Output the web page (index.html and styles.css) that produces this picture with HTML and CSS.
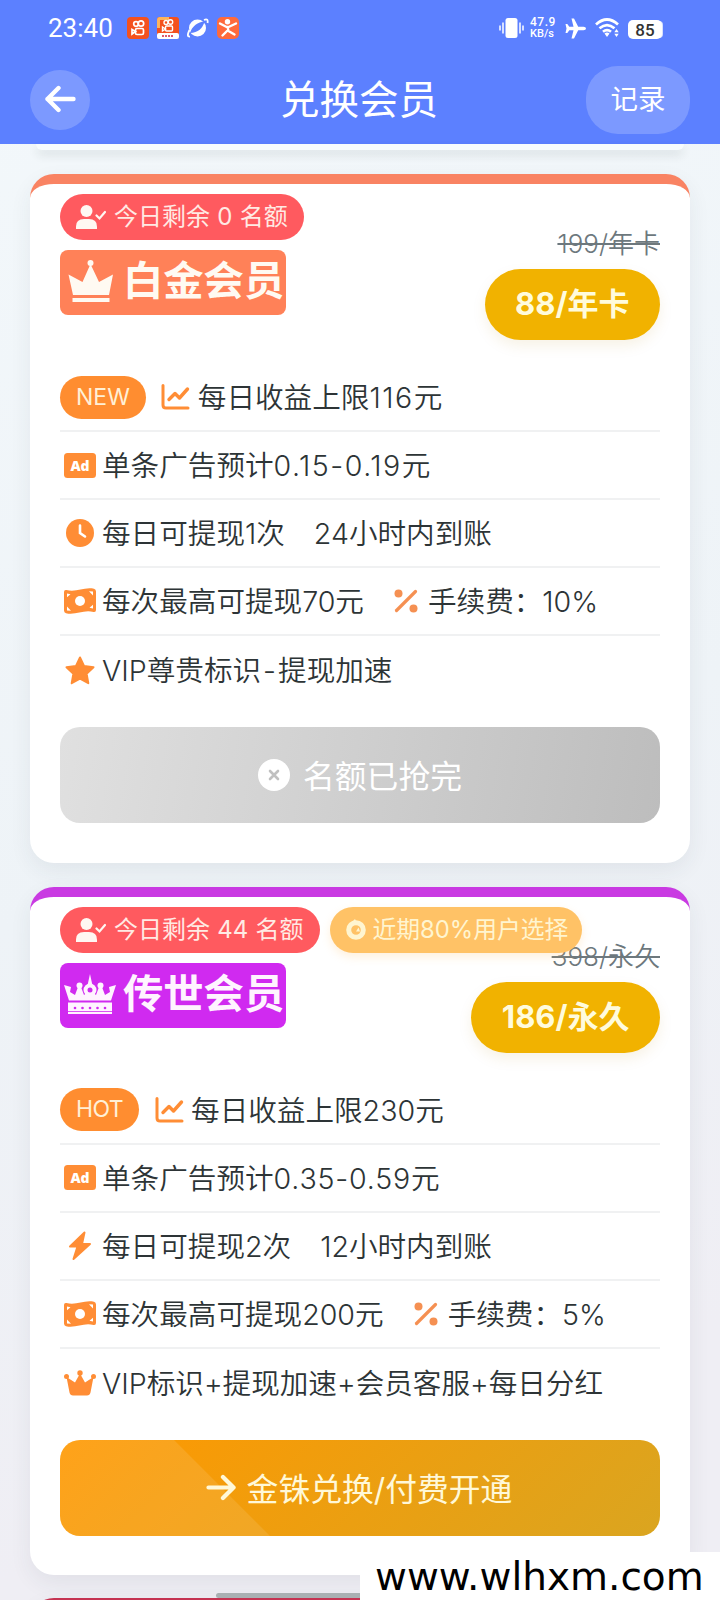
FILE: index.html
```html
<!DOCTYPE html>
<html lang="zh-CN">
<head>
<meta charset="utf-8">
<title>兑换会员</title>
<link rel="stylesheet" href="styles.css">
</head>
<body>
<svg class="sprite" width="0" height="0">
  <symbol id="user-check" viewBox="0 0 30 24"><circle cx="10.500" cy="6" r="6"/><path d="M0 24v-2.500Q0 14 8 14h5q8 0 8 7.500V24z"/><path d="M20.500 10.500l3 3 5.500-6.500" fill="none" stroke="currentColor" stroke-width="2.200" stroke-linecap="round"/></symbol>
  <symbol id="chart" viewBox="0 0 28 26"><g fill="none" stroke="currentColor" stroke-width="3" stroke-linecap="round" stroke-linejoin="round"><path d="M1.500 1.500V21q0 3 3 3h22"/><path d="M7.500 15.500l6-6 4.500 4.500L26 5" stroke-width="3.400"/></g></symbol>
  <symbol id="clock" viewBox="0 0 28 28"><circle cx="14" cy="14" r="14"/><path d="M14 6.500V14l5 3.500" fill="none" stroke="#fff" stroke-width="2.600" stroke-linecap="round"/></symbol>
  <symbol id="money" viewBox="0 0 32 26"><path d="M0 4Q0 1.500 2.500 2C12 5 20-1.500 30 .8q2 .7 2 2.700v18.500q0 2.500-2.500 2C20 21 12 27.500 2 25.200Q0 24.500 0 22.500z"/><circle cx="16" cy="13" r="5" fill="#fff"/><path d="M3 5.500l3.500.8-3.500 3zM29 20.500l-3.500-.8 3.500-3zM3 22.500v-4l4 4.300zM29 3.500v4l-4-4.300z" fill="#fff"/></symbol>
  <symbol id="star" viewBox="0 0 30 29"><path d="M15 1.500l4 8.500 9.500 1.300-6.900 6.500 1.700 9.400L15 22.700l-8.300 4.500 1.700-9.400-6.900-6.500L11 10z" stroke="currentColor" stroke-width="2" stroke-linejoin="round"/></symbol>
  <symbol id="percent" viewBox="0 0 24 24"><circle cx="4.500" cy="4.500" r="4"/><circle cx="19.500" cy="19.500" r="4"/><path d="M21.500 2.500l-19 19" stroke="currentColor" stroke-width="3.200" stroke-linecap="round"/></symbol>
  <symbol id="bolt" viewBox="0 0 24 30"><path d="M16.500 1.500L2 15.500h7.500L5.500 28 22 13h-8z" stroke="currentColor" stroke-width="2" stroke-linejoin="round"/></symbol>
  <symbol id="crown-small" viewBox="0 0 32 26"><circle cx="16" cy="3" r="2.700"/><circle cx="2.500" cy="6.500" r="2.500"/><circle cx="29.500" cy="6.500" r="2.500"/><path d="M16 3.500l5 9 8.500-5.500-3 15.500q-.7 3-3.500 3H9q-2.800 0-3.500-3L2.500 7l8.500 5.500z"/></symbol>
  <symbol id="crown" viewBox="0 0 46 43"><circle cx="22.500" cy="3" r="3"/><path d="M22.500 4l8.500 18 14-7.500L41 35H5L.5 14.500 14.500 22zM4.500 38h37v4h-37z"/></symbol>
  <symbol id="royal" viewBox="0 0 52 40"><path d="M4 28.500h44V40H4z"/><path d="M5 26.500L0 11l7 2-1 5 5 3 3-8h3l3 8 6-5 6 5 3-8h3l3 8 5-3-1-5 7-2-5 15.500z"/><circle cx="26" cy="16" r="6.500"/><path d="M26 0l2.200 10h-4.400z"/><circle cx="15.500" cy="11.500" r="3"/><circle cx="36.500" cy="11.500" r="3"/><g fill="#d02af0"><circle cx="26" cy="16" r="2.500"/><circle cx="11" cy="34" r="1.300"/><circle cx="18.500" cy="34" r="1.300"/><circle cx="26" cy="34" r="1.300"/><circle cx="33.500" cy="34" r="1.300"/><circle cx="41" cy="34" r="1.300"/></g><path d="M4 37.500h44" stroke="#d02af0" stroke-width=".8"/></symbol>
  <symbol id="arrow" viewBox="0 0 32 28"><path d="M2.500 14h26M17.500 3l11 11-11 11" fill="none" stroke="currentColor" stroke-width="4.400" stroke-linecap="round" stroke-linejoin="round"/></symbol>
</svg>

<div class="screen">
  <header class="header">
    <div class="status">
      <div class="status-left">
        <span class="time">23:40</span>
        <svg class="app" viewBox="0 0 22 22"><rect width="22" height="22" rx="4" fill="#f4511e"/><g fill="none" stroke="#fff" stroke-width="1.700"><circle cx="9" cy="7" r="2.300"/><circle cx="14" cy="6.500" r="2.700"/><rect x="8.500" y="11.500" width="8" height="6" rx="1.500"/><path d="M8.500 14.500l-3.500-2v4.500z"/></g></svg>
        <svg class="app" viewBox="0 0 22 22"><rect width="22" height="22" rx="3" fill="#f4511e"/><path d="M0 3q0-3 3-3h9v3H3v8H0z" fill="#ffb45c"/><g fill="none" stroke="#fff" stroke-width="1.400"><circle cx="9" cy="5.500" r="2"/><circle cx="13.500" cy="5" r="2.200"/><rect x="8.500" y="9" width="7" height="5" rx="1"/><path d="M8.500 12l-3-2v4z"/></g><rect y="16" width="22" height="6" rx="2" fill="#fff"/><path d="M5 19h12" stroke="#dc5a70" stroke-width="1.800" stroke-dasharray="2 1"/></svg>
        <svg class="app" viewBox="0 0 22 22"><circle cx="10.500" cy="11" r="8.500" fill="#fff"/><path d="M3 16C5 9 11 5 17.500 4.500 16 11 11 16 3 16z" fill="#5c80ff"/><path d="M2.500 13Q-1 20 3 19.500M17 3q4.500-2 3.500 3" fill="none" stroke="#fff" stroke-width="1.800"/></svg>
        <svg class="app" viewBox="0 0 22 22"><rect width="22" height="22" rx="5" fill="#ff6a3c"/><circle cx="10.500" cy="4.700" r="2.700" fill="#fff"/><path d="M3 6.500l7.500 4 8.500-4M10.500 10l1 4 6 3.500M11 13l-5.500 5.500" fill="none" stroke="#fff" stroke-width="2.400" stroke-linecap="round"/></svg>
      </div>
      <div class="status-right">
        <svg width="25" height="22" viewBox="0 0 25 22"><rect x="6.500" y="1" width="12" height="20" rx="2.500" fill="#fff"/><path d="M4 5.500v11M21 5.500v11M1 8.500v5M24 8.500v5" stroke="#fff" stroke-width="1.500"/></svg>
        <span class="speed"><span>47.9</span><span>KB/s</span></span>
        <svg class="plane" width="21" height="21" viewBox="0 0 21 21"><path d="M21 10.500q0 1.700-2.500 1.700h-5.300L9 20.500H6.500l2-8.300H4.300l-2 2.800H.5l1-4.500L.5 6h1.800l2 2.800h4.200L6.500.5H9l4.200 8.300h5.300q2.500 0 2.500 1.700z" fill="#fff"/></svg>
        <svg class="wifi" width="25" height="20" viewBox="0 0 25 20"><g fill="none" stroke="#fff" stroke-width="2.700"><path d="M1 6.500q11-10 22 0M4.500 10.300q7.500-6.500 15 0M8 13.800q4-3.300 8 0"/></g><path d="M9.500 15.500q2.500-2 5 0L12 19z" fill="#fff"/><path d="M19.300 14.200L21.500 11l2.200 3.200zM19.300 15.800l2.200 3.200 2.200-3.200z" fill="#fff"/></svg>
        <span class="battery">85</span>
      </div>
    </div>
    <nav class="nav">
      <span class="back"><svg width="32" height="28"><use href="#arrow"/></svg></span>
      <h1 class="title">兑换会员</h1>
      <span class="record">记录</span>
    </nav>
  </header>

  <main class="list">
    <section class="card-tail"></section>

    <section class="card platinum">
      <div class="badges">
        <span class="quota"><svg width="30" height="24"><use href="#user-check"/></svg>今日剩余 <b>0</b> 名额</span>
      </div>
      <div class="head">
        <h2 class="level"><svg class="level-icon" width="46" height="43"><use href="#crown"/></svg>白金会员</h2>
        <div class="price"><s class="old">199/年卡</s><span class="now">88/年卡</span></div>
      </div>
      <ul class="features">
        <li><span class="tag">NEW</span><i class="ico"><svg width="29" height="26"><use href="#chart"/></svg></i><span class="text">每日收益上限<span class="wide">116</span>元</span></li>
        <li><i class="ico"><span class="ad">Ad</span></i><span class="text">单条广告预计<span class="wide">0.15-0.19</span>元</span></li>
        <li><i class="ico"><svg width="28" height="28"><use href="#clock"/></svg></i><span class="text">每日可提现1次</span><span class="text second">24小时内到账</span></li>
        <li><i class="ico"><svg width="32" height="26"><use href="#money"/></svg></i><span class="text">每次最高可提现70元</span><i class="ico pct"><svg width="24" height="24"><use href="#percent"/></svg></i><span class="text">手续费：10%</span></li>
        <li><i class="ico"><svg width="30" height="29"><use href="#star"/></svg></i><span class="text">VIP尊贵标识<span class="dash">-</span>提现加速</span></li>
      </ul>
      <div class="action sold"><svg width="32" height="32" viewBox="0 0 32 32"><circle cx="16" cy="16" r="16" fill="#fff"/><path d="M12 12l8 8m0-8l-8 8" stroke="#c0c0c0" stroke-width="2.600" stroke-linecap="round"/></svg><span>名额已抢完</span></div>
    </section>

    <section class="card legend">
      <div class="badges">
        <span class="quota"><svg width="30" height="24"><use href="#user-check"/></svg>今日剩余 <b>44</b> 名额</span>
        <span class="popular"><svg width="20" height="21" viewBox="0 0 20 21"><circle cx="10" cy="11" r="7.300" fill="none" stroke="currentColor" stroke-width="5"/><path d="M5 4l4-4 2 4z" fill="currentColor"/><path d="M10 12.500l2.500-4 1.500 4z" fill="currentColor"/></svg>近期80%用户选择</span>
      </div>
      <div class="head">
        <h2 class="level"><svg class="level-icon" width="52" height="40"><use href="#royal"/></svg>传世会员</h2>
        <div class="price"><s class="old">398/永久</s><span class="now">186/永久</span></div>
      </div>
      <ul class="features">
        <li><span class="tag hot">HOT</span><i class="ico"><svg width="29" height="26"><use href="#chart"/></svg></i><span class="text">每日收益上限230元</span></li>
        <li><i class="ico"><span class="ad">Ad</span></i><span class="text">单条广告预计<span class="mid">0.35-0.59</span>元</span></li>
        <li><i class="ico"><svg width="24" height="30"><use href="#bolt"/></svg></i><span class="text">每日可提现2次</span><span class="text second">12小时内到账</span></li>
        <li><i class="ico"><svg width="32" height="26"><use href="#money"/></svg></i><span class="text">每次最高可提现200元</span><i class="ico pct"><svg width="24" height="24"><use href="#percent"/></svg></i><span class="text">手续费：5%</span></li>
        <li><i class="ico"><svg width="32" height="26"><use href="#crown-small"/></svg></i><span class="text">VIP标识+提现加速+会员客服+每日分红</span></li>
      </ul>
      <div class="action buy"><svg width="31" height="27"><use href="#arrow"/></svg><span>金铢兑换/付费开通</span></div>
    </section>

    <section class="card next"></section>
  </main>
  <div class="home-bar"></div>
  <div class="watermark">www.wlhxm.com</div>
</div>
</body>
</html>
```

FILE: styles.css
```css
* { box-sizing: border-box; }
body {
  margin: 0;
  font-family: Inter, "Noto Sans CJK SC", sans-serif;
  color: #2d3436;
}
svg { display: block; flex: none; fill: currentColor; }
.sprite { position: absolute; }
.screen {
  position: relative;
  display: flex;
  flex-direction: column;
  width: 720px;
  height: 1600px;
  overflow: hidden;
  background: linear-gradient(160deg, #f3f8fb 0%, #eef3f7 50%, #efeef4 85%);
}

.header { flex: none; height: 144px; background: #5c80ff; color: #fff; }
.status { display: flex; justify-content: space-between; height: 56px; padding: 0 58px 0 48px; }
.status-left, .status-right { display: flex; align-items: center; }
.time { width: 79px; font: 26px/58px Roboto, sans-serif; }
.app { width: 22px; height: 22px; margin-right: 8px; }
.speed {
  display: flex;
  flex-direction: column;
  width: 27px;
  margin-left: 6px;
  font: 500 11px/11px Roboto, sans-serif;
}
.speed span:first-child { font-size: 12px; letter-spacing: .5px; }
.plane { margin-left: 8px; }
.wifi { margin-left: 9px; }
.battery {
  width: 34px;
  height: 19px;
  margin: 2px 0 0 8px;
  border-radius: 5px;
  background: #fff;
  box-shadow: 2px 0 0 -1px #d6e0ff;
  color: #333;
  font: 500 17px/20px Roboto, sans-serif;
  text-align: center;
}
.nav { display: flex; align-items: center; justify-content: space-between; height: 88px; padding: 0 30px; }
.back {
  display: flex;
  align-items: center;
  justify-content: center;
  width: 60px;
  height: 60px;
  margin-right: 42px;
  padding-bottom: 2px;
  border-radius: 50%;
  background: rgba(255, 255, 255, .2);
}
.back svg { transform: scaleX(-1); }
.title { margin: 0; font-size: 39.500px; font-weight: 400; line-height: 60px; }
.record {
  width: 104px;
  height: 68px;
  border-radius: 32px;
  background: rgba(255, 255, 255, .2);
  font-size: 27.500px;
  line-height: 67px;
  text-align: center;
}

.list { display: flex; flex-direction: column; gap: 24px; padding: 0 30px; }
.card-tail {
  flex: none;
  height: 6px;
  margin: 0 6px;
  border-radius: 0 0 20px 20px;
  background: #f8fcfd;
  box-shadow: 0 5px 10px rgba(30, 50, 40, .12);
}
.card {
  flex: none;
  display: flex;
  flex-direction: column;
  height: 688.500px;
  padding: 10px 30px 0;
  border-top: 10px solid #f98363;
  border-radius: 24px;
  background: #fff;
  box-shadow: 0 8px 22px rgba(40, 60, 70, .07);
}
.legend { border-color: #c93ae2; }
.next { margin-top: -1px; border-color: #c53352; }
.badges { display: flex; gap: 10px; margin-right: -10px; }
.quota, .popular {
  position: relative;
  z-index: 1;
  display: flex;
  align-items: center;
  height: 46px;
  padding: 0 16px;
  border-radius: 23px;
  background: #ff5a5f;
  color: #ffeae4;
  font-size: 24px;
  line-height: 46px;
  white-space: pre;
}
.quota b { margin: 0 .5px; font-weight: 400; }
.quota svg { margin-right: 8px; color: #fff7f2; }
.popular { padding: 0 14px 0 16px; background: #ffc266; color: #fff5d0; font-size: 23.800px; box-shadow: 0 4px 10px rgba(255, 180, 80, .2); }
.popular svg { margin-right: 7px; }
.head { display: flex; justify-content: space-between; height: 124px; }
.level {
  display: flex;
  align-items: center;
  width: 226px;
  height: 65px;
  margin: 10px 0 0;
  padding-bottom: 3px;
  border-radius: 8px;
  background: #ff8158;
  color: #fffaf2;
  font-size: 40.300px;
  font-weight: 700;
  line-height: 62px;
  white-space: nowrap;
}
.level-icon { margin: 0 9px 0 8px; }
.legend .level { background: #d02af0; color: #fff4ff; }
.legend .level-icon { margin: 0 7px 0 4px; }
.price { display: flex; flex-direction: column; align-items: flex-end; margin-top: -17px; }
.old { color: #6d787d; font-size: 26px; font-weight: 350; line-height: 41px; }
.now {
  height: 71px;
  margin-top: 5px;
  padding: 0 30.500px;
  border-radius: 36px;
  background: #f1b200;
  box-shadow: 0 6px 14px rgba(180, 130, 0, .1);
  color: #fffbdc;
  font-size: 31px;
  font-weight: 700;
  line-height: 69px;
}
.features { margin: 0; padding: 0; list-style: none; font-size: 28.600px; font-weight: 350; }
.features li {
  display: flex;
  align-items: center;
  height: 68.100px;
  border-bottom: 2px solid #f0f1f2;
  white-space: nowrap;
}
.features li:last-child { border-bottom: 0; }
.text { margin-top: -3px; }
.wide { letter-spacing: 1.500px; }
.mid { letter-spacing: .8px; }
.dash { margin: 0 2px; }
.tag {
  height: 43px;
  margin-right: 10px;
  padding: 0 16px;
  border-radius: 22px;
  background: #ff8d30;
  color: #fff0d6;
  font-size: 23px;
  font-weight: 400;
  line-height: 43px;
}
.hot { letter-spacing: -.6px; }
.ico { display: flex; justify-content: center; width: 40px; margin-right: 2px; color: #ff8d35; font-style: normal; }
.pct { margin-left: 22px; color: #f59052; }
.second { margin-left: 29px; }
.ad {
  width: 32px;
  height: 25px;
  border-radius: 3.500px;
  background: #ff8d35;
  color: #fff;
  font: 800 14px/25px "Open Sans", sans-serif;
  text-align: center;
}
.action {
  position: relative;
  display: flex;
  align-items: center;
  justify-content: center;
  height: 96px;
  margin-top: 23px;
  border-radius: 20px;
  overflow: hidden;
  color: #fff;
  font-size: 31.800px;
}
.action span { margin-top: -2px; }
.sold { gap: 13px; background: linear-gradient(100deg, #e0e0e0, #bdbdbd); }
.buy { gap: 10px; padding-right: 2px; background: linear-gradient(135deg, #ff9800, #daa520); color: #fff8d8; }
.buy svg, .buy span { position: relative; }
.buy::before {
  content: "";
  position: absolute;
  inset: 0;
  background: rgba(255, 255, 255, .1);
  clip-path: polygon(0 0, 19% 0, 35% 100%, 0 100%);
}
.home-bar {
  position: absolute;
  left: 216px;
  bottom: 2px;
  width: 288px;
  height: 5px;
  border-radius: 3px;
  background: #a9b0b3;
}
.watermark {
  position: absolute;
  right: 0;
  bottom: 0;
  width: 360px;
  height: 48px;
  padding-left: 15px;
  background: #fff;
  color: #000;
  font: 39px/50px "DejaVu Sans", sans-serif;
}
```
